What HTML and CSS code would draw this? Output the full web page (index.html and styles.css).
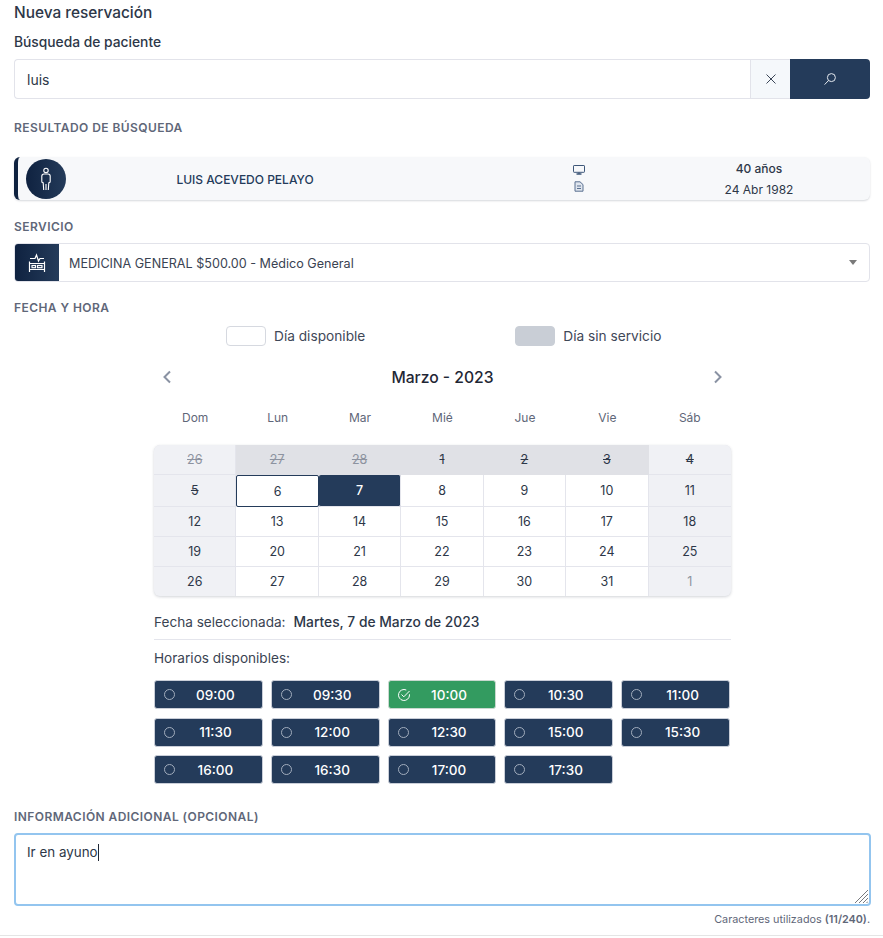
FILE: index.html
```html
<!DOCTYPE html>
<html lang="es">
<head>
<meta charset="utf-8">
<title>Nueva reservación</title>
<link rel="stylesheet" href="styles.css">
</head>
<body>
<main class="page">
  <h1 class="title">Nueva reservación</h1>
  <h2 class="subtitle">Búsqueda de paciente</h2>
  <div class="search">
    <div class="search-input">luis</div>
    <button class="search-clear" type="button" aria-label="Limpiar">
      <svg width="12" height="12" viewBox="0 0 12 12" fill="none" stroke="#3a4556" stroke-width="1"><path d="M1.5 1.5l9 9M10.5 1.5l-9 9"/></svg>
    </button>
    <button class="search-go" type="button" aria-label="Buscar">
      <svg width="14" height="14" viewBox="0 0 14 14" fill="none" stroke="#e4e9f0" stroke-width="1"><circle cx="8.4" cy="5.6" r="4"/><path d="M5.6 8.4L1.6 12.6"/></svg>
    </button>
  </div>

  <div class="label label-result">RESULTADO DE BÚSQUEDA</div>
  <section class="patient">
    <div class="avatar">
      <svg width="14" height="24" viewBox="0 0 14 24" fill="none" stroke="#fff" stroke-width="1.1"><circle cx="7" cy="3.4" r="2.2"/><path d="M5 7h4c1.300 0 2.200 1 2.200 2.200V14.500c0 .8-.6 1.300-1.400 1.300L9.300 23M5 7c-1.300 0-2.200 1-2.200 2.200V14.500c0 .8.600 1.300 1.400 1.300L4.700 23M7 17v6"/></svg>
    </div>
    <div class="patient-name">LUIS ACEVEDO PELAYO</div>
    <div class="patient-icons">
      <svg width="12" height="10" viewBox="0 0 12 10" fill="none" stroke="#3d5678" stroke-width="1"><rect x=".5" y=".5" width="11" height="6.800" rx=".6"/><path d="M3.500 9h5M6 7.500V9" stroke-width="1.300"/></svg>
      <svg width="10" height="11" viewBox="0 0 10 11" fill="#dfe5ee" stroke="#5a7090" stroke-width="1"><path d="M1 .8h5l3 2.800v6.600H1z"/><path d="M3 5h4M3 7.500h4" stroke-width="1.200"/></svg>
    </div>
    <div class="patient-data">
      <strong>40 años</strong>
      <span>24 Abr 1982</span>
    </div>
  </section>

  <div class="label label-service">SERVICIO</div>
  <div class="service">
    <div class="service-icon">
      <svg width="20" height="20" viewBox="0 0 20 20" fill="none" stroke="#fff" stroke-width="1.200"><path d="M3 5.500h5l1.500-3.500 2 6 1.500-2.500h4"/><path d="M2.500 8.500V19M17.500 8.500V19M2.500 10.500h15M2.500 16.500h15"/><rect x="5" y="12.500" width="3.500" height="2.200"/><rect x="10.500" y="12.500" width="4.500" height="2.200"/></svg>
    </div>
    <div class="service-text">MEDICINA GENERAL $500.00 - Médico General</div>
    <div class="caret-down"></div>
  </div>

  <div class="label label-date">FECHA Y HORA</div>
  <div class="legend">
    <div class="legend-item"><span class="swatch"></span>Día disponible</div>
    <div class="legend-item legend-off"><span class="swatch swatch-off"></span>Día sin servicio</div>
  </div>

  <section class="calendar">
    <header class="month">
      <svg class="chev" width="10" height="14" viewBox="0 0 10 14" fill="none" stroke="#8a92a3" stroke-width="2"><path d="M8 1.500L2.500 7 8 12.500"/></svg>
      <span>Marzo - 2023</span>
      <svg class="chev" width="10" height="14" viewBox="0 0 10 14" fill="none" stroke="#8a92a3" stroke-width="2"><path d="M2 1.500L7.500 7 2 12.500"/></svg>
    </header>
    <div class="weekdays">
      <span>Dom</span><span>Lun</span><span>Mar</span><span>Mié</span><span>Jue</span><span>Vie</span><span>Sáb</span>
    </div>
    <div class="days">
      <div class="d w faded"><s>26</s></div>
      <div class="d off faded"><s>27</s></div>
      <div class="d off faded"><s>28</s></div>
      <div class="d off"><s>1</s></div>
      <div class="d off"><s>2</s></div>
      <div class="d off"><s>3</s></div>
      <div class="d w"><s>4</s></div>

      <div class="d w"><s>5</s></div>
      <div class="d today">6</div>
      <div class="d sel">7</div>
      <div class="d">8</div>
      <div class="d">9</div>
      <div class="d">10</div>
      <div class="d w">11</div>

      <div class="d w">12</div><div class="d">13</div><div class="d">14</div><div class="d">15</div><div class="d">16</div><div class="d">17</div><div class="d w">18</div>
      <div class="d w">19</div><div class="d">20</div><div class="d">21</div><div class="d">22</div><div class="d">23</div><div class="d">24</div><div class="d w">25</div>
      <div class="d w r5">26</div><div class="d r5">27</div><div class="d r5">28</div><div class="d r5">29</div><div class="d r5">30</div><div class="d r5">31</div><div class="d w r5 next">1</div>
    </div>

    <p class="selected">Fecha seleccionada:<strong>Martes, 7 de Marzo de 2023</strong></p>
    <p class="avail">Horarios disponibles:</p>
    <div class="slots">
      <button class="slot" type="button"><i class="radio"></i>09:00</button>
      <button class="slot" type="button"><i class="radio"></i>09:30</button>
      <button class="slot slot-on" type="button"><svg class="check" width="14" height="14" viewBox="0 0 14 14" fill="none" stroke="#fff" stroke-width="1"><path d="M12.500 6.300V7A5.500 5.500 0 1 1 9.300 2"/><path d="M4.500 6.500L6.800 8.800 12.500 3"/></svg>10:00</button>
      <button class="slot" type="button"><i class="radio"></i>10:30</button>
      <button class="slot" type="button"><i class="radio"></i>11:00</button>
      <button class="slot" type="button"><i class="radio"></i>11:30</button>
      <button class="slot" type="button"><i class="radio"></i>12:00</button>
      <button class="slot" type="button"><i class="radio"></i>12:30</button>
      <button class="slot" type="button"><i class="radio"></i>15:00</button>
      <button class="slot" type="button"><i class="radio"></i>15:30</button>
      <button class="slot" type="button"><i class="radio"></i>16:00</button>
      <button class="slot" type="button"><i class="radio"></i>16:30</button>
      <button class="slot" type="button"><i class="radio"></i>17:00</button>
      <button class="slot" type="button"><i class="radio"></i>17:30</button>
    </div>
  </section>

  <div class="label label-info">INFORMACIÓN ADICIONAL (OPCIONAL)</div>
  <div class="notes">Ir en ayuno<span class="cursor"></span>
    <svg class="grip" width="13" height="13" viewBox="0 0 13 13" fill="none" stroke="#77797e" stroke-width="1"><path d="M0 13L13 0M4 13L13 4M8 13l5-5M11.500 13l1.500-1.500"/></svg>
  </div>
  <p class="counter">Caracteres utilizados <strong>(11/240)</strong>.</p>
</main>
</body>
</html>
```
FILE: styles.css
```css
* { box-sizing: border-box; }
html, body { margin: 0; padding: 0; background: #fff; }
body { font-family: Inter, "Noto Sans", sans-serif; color: #2d3748; height: 938px; overflow: hidden; }
button { font-family: inherit; border: 0; padding: 0; cursor: pointer; }

.page { padding: 0 13px 0 14px; height: 936px; border-bottom: 1px solid #e5e5e5; }

.title { margin: 0; padding-top: 3px; font-size: 15.400px; line-height: 19px; font-weight: 500; color: #2d3748; }
.subtitle { margin: 12px 0 0; font-size: 13.800px; line-height: 17px; font-weight: 500; color: #2d3748; }

.search { display: flex; height: 40px; margin-top: 8px; }
.search-input { flex: 1; border: 1px solid #e2e3ea; border-right: 0; border-radius: 4px 0 0 4px; padding: 0 12px; font-size: 14px; line-height: 40px; color: #2d3748; }
.search-clear { width: 40px; background: #f5f8fb; border: 1px solid #e2e3ea; border-right: 0; display: flex; align-items: center; justify-content: center; }
.search-go { width: 80px; background: #243b5a; border-radius: 0 4px 4px 0; display: flex; align-items: center; justify-content: center; }

.label { font-size: 12px; line-height: 15px; font-weight: 600; letter-spacing: .43px; color: #5f6779; }
.label-result { margin-top: 21px; }
.label-service { margin-top: 19px; }
.label-date { margin-top: 18px; }
.label-info { margin-top: 25px; }

.patient { display: grid; grid-template-columns: 52px 350px 1fr 222px; align-items: center; height: 43px; margin-top: 22px; background: #f7f8fa; border-left: 4px solid #0f2240; border-radius: 6px; box-shadow: 0 1px 2px rgba(30, 40, 60, .18); }
.avatar { width: 40px; height: 40px; margin-left: 8px; border-radius: 50%; background: linear-gradient(90deg, #0f2240, #243b5a); display: flex; align-items: center; justify-content: center; }
.patient-name { padding-top: 2px; font-size: 12px; font-weight: 500; color: #243b5a; text-align: center; }
.patient-icons { display: flex; flex-direction: column; align-items: center; gap: 6px; padding-left: 90px; }
.patient-data { display: flex; flex-direction: column; align-items: center; font-size: 12px; line-height: 21px; color: #2d3748; }
.patient-data strong { font-weight: 500; }

.service { display: flex; align-items: center; height: 39px; margin-top: 9px; border: 1px solid #e2e3ea; border-radius: 4px; }
.service-icon { width: 44px; height: 37px; background: linear-gradient(90deg, #0f2240, #243b5a); border-radius: 3px 0 0 3px; display: flex; align-items: center; justify-content: center; }
.service-text { flex: 1; padding: 2px 0 0 10px; font-size: 12.600px; color: #3a4352; }
.caret-down { width: 0; height: 0; margin-right: 12px; border-left: 4px solid transparent; border-right: 4px solid transparent; border-top: 5px solid #7a7a7a; }

.legend { display: flex; height: 20px; margin-top: 11px; padding-left: 212px; font-size: 13.700px; color: #3f4858; }
.legend-item { display: flex; align-items: center; gap: 8px; line-height: 20px; }
.legend-off { margin-left: 150px; }
.swatch { width: 40px; height: 20px; border: 1px solid #d6d9e0; border-radius: 4px; background: #fff; }
.swatch-off { background: #c9ced6; border-color: #c9ced6; }

.calendar { width: 577px; margin-left: 140px; }
.month { display: flex; align-items: center; justify-content: space-between; height: 22px; margin-top: 20px; padding: 0 8px; font-size: 15.700px; font-weight: 500; color: #1f2735; }
.weekdays { display: grid; grid-template-columns: repeat(7, 1fr); margin-top: 22px; font-size: 12px; line-height: 15px; color: #5f6779; text-align: center; }

.days { display: grid; grid-template-columns: repeat(7, 1fr); grid-template-rows: 30px 32px 30px 30px 29px; margin-top: 20px; border-radius: 6px; overflow: hidden; box-shadow: 0 1px 3px rgba(30, 40, 60, .2); background: #e4e5ec; font-size: 12.500px; color: #2d3748; }
.d { display: flex; align-items: center; justify-content: center; background: #fff; border-right: 1px solid #e4e5ec; border-bottom: 1px solid #e4e5ec; }
.d.w { background: #f0f1f5; }
.d.off { background: #e0e1e6; border-color: #e0e1e6; }
.d.r5 { border-bottom: 0; }
.d:nth-child(7n) { border-right: 0; }
.d.faded, .d.next { color: #8d93a0; }
.d.today { border: 1px solid #243b5a; border-radius: 2px; }
.d.sel { background: #243b5a; color: #fff; border-radius: 2px; font-weight: 500; }

.selected { margin: 18px 0 0; height: 17px; line-height: 17px; font-size: 13.600px; color: #3a4352; }
.selected strong { margin-left: 8px; font-size: 13.800px; font-weight: 500; color: #2d3748; }
.avail { margin: 8px 0 0; padding-top: 10px; border-top: 1px solid #e4e5ec; font-size: 13.600px; line-height: 17px; color: #3a4352; }

.slots { display: grid; grid-template-columns: repeat(5, 1fr); grid-auto-rows: 29px; gap: 8.500px 8px; margin: 13px 1px 0 0; }
.slot { position: relative; background: #243b5a; border: 1px solid #c9ced8; border-radius: 3px; color: #fff; font-size: 13.500px; font-weight: 500; display: flex; align-items: center; justify-content: center; padding-left: 14px; }
.slot-on { background: #339b60; border-color: #c9d8cf; }
.radio { position: absolute; left: 9px; top: 8px; width: 11px; height: 11px; border: 1px solid #a2adbd; border-radius: 50%; }
.check { position: absolute; left: 8px; top: 7px; }

.notes { position: relative; height: 73px; margin-top: 9px; margin-right: -1px; padding: 7px 11px; border: 2px solid #93c5ef; border-radius: 4px; font-size: 13.400px; line-height: 20px; color: #2d3748; overflow: hidden; }
.cursor { display: inline-block; width: 1px; height: 17px; background: #1f2735; vertical-align: -4px; }
.grip { position: absolute; right: 1px; bottom: 1px; }
.counter { margin: 7px 0 0; text-align: right; font-size: 10.800px; line-height: 13px; color: #5f6779; }
.counter strong { font-weight: 600; }
```
